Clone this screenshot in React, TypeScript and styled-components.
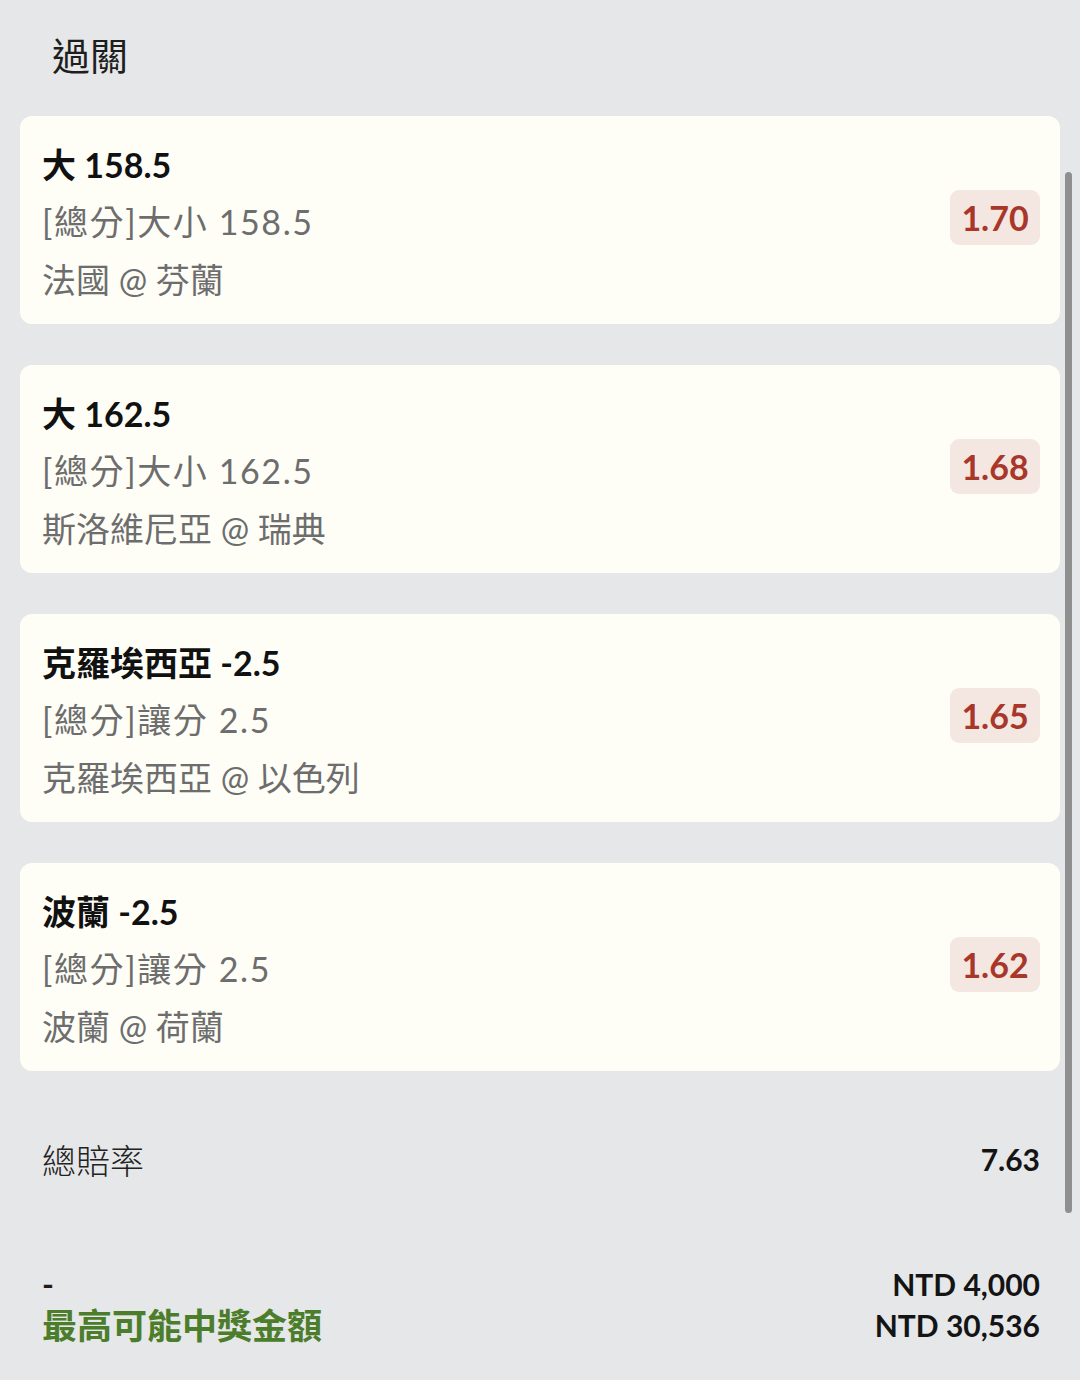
import styled, { createGlobalStyle } from 'styled-components';

const GlobalStyle = createGlobalStyle`
  html, body {
    margin: 0;
    padding: 0;
    background: #e6e7e9;
  }
  body {
    font-family: Lato, "Noto Sans CJK TC", sans-serif;
    color: #1c1c1c;
  }
`;

const Page = styled.div`
  position: relative;
  width: 1080px;
  height: 1380px;
  overflow: hidden;
  background: #e6e7e9;
  box-sizing: border-box;
  padding: 0 20px;
`;

const Header = styled.h1`
  margin: 0;
  height: 116px;
  display: flex;
  align-items: center;
  padding-left: 32px;
  padding-bottom: 10px;
  box-sizing: border-box;
  font-size: 38px;
  font-weight: 400;
  color: #1e1e1e;
`;

const CardList = styled.div`
  display: flex;
  flex-direction: column;
  gap: 41px;
`;

const Card = styled.div`
  height: 208px;
  box-sizing: border-box;
  background: #fefef7;
  border-radius: 12px;
  padding: 20px 20px 16px 22px;
  display: flex;
  align-items: center;
  justify-content: space-between;
`;

const Info = styled.div`
  display: flex;
  flex-direction: column;
`;

const Line = styled.div<{ $strong?: boolean; $spaced?: boolean }>`
  font-size: 34px;
  line-height: 57.5px;
  white-space: nowrap;
  letter-spacing: ${(p) => (p.$spaced ? '1.6px' : '0')};
  font-weight: ${(p) => (p.$strong ? 700 : 400)};
  color: ${(p) => (p.$strong ? '#111' : '#6d6d6d')};
`;

const Odds = styled.div`
  width: 90px;
  height: 55px;
  margin-bottom: 9px;
  border-radius: 9px;
  background: #f4e6e0;
  color: #a8372a;
  font-size: 34px;
  font-weight: 700;
  display: flex;
  align-items: center;
  justify-content: center;
`;

const Row = styled.div<{ $align?: string }>`
  display: flex;
  justify-content: space-between;
  align-items: ${(p) => p.$align || 'center'};
  padding: 0 20px 0 22px;
`;

const TotalRow = styled(Row)`
  margin-top: 66px;
  height: 44px;
`;

const Label = styled.div`
  font-size: 34px;
  font-weight: 300;
  color: #222;
`;

const Value = styled.div`
  font-size: 30px;
  font-weight: 700;
  color: #141414;
`;

const PayoutRow = styled(Row)`
  margin-top: 83px;
`;

const Stack = styled.div<{ $right?: boolean }>`
  display: flex;
  flex-direction: column;
  align-items: ${(p) => (p.$right ? 'flex-end' : 'flex-start')};
`;

const Dash = styled.div`
  font-size: 32px;
  font-weight: 700;
  line-height: 40px;
  height: 40px;
`;

const WinLabel = styled.div`
  font-size: 35px;
  font-weight: 700;
  line-height: 42px;
  color: #4b7d2b;
`;

const Amount = styled.div`
  font-size: 30px;
  font-weight: 700;
  line-height: 41px;
  color: #141414;
`;

const Scrollbar = styled.div`
  position: absolute;
  right: 8px;
  top: 172px;
  width: 7px;
  height: 1041px;
  border-radius: 4px;
  background: #8f8f90;
`;

const bets = [
  { title: '大 158.5', market: '[總分]大小 158.5', match: '法國 @ 芬蘭', odds: '1.70' },
  { title: '大 162.5', market: '[總分]大小 162.5', match: '斯洛維尼亞 @ 瑞典', odds: '1.68' },
  { title: '克羅埃西亞 -2.5', market: '[總分]讓分 2.5', match: '克羅埃西亞 @ 以色列', odds: '1.65' },
  { title: '波蘭 -2.5', market: '[總分]讓分 2.5', match: '波蘭 @ 荷蘭', odds: '1.62' },
];

export default function App() {
  return (
    <>
      <GlobalStyle />
      <Page>
        <Header>過關</Header>
        <CardList>
          {bets.map((b) => (
            <Card key={b.match}>
              <Info>
                <Line $strong>{b.title}</Line>
                <Line $spaced>{b.market}</Line>
                <Line>{b.match}</Line>
              </Info>
              <Odds>{b.odds}</Odds>
            </Card>
          ))}
        </CardList>
        <TotalRow>
          <Label>總賠率</Label>
          <Value>7.63</Value>
        </TotalRow>
        <PayoutRow $align="flex-end">
          <Stack>
            <Dash>-</Dash>
            <WinLabel>最高可能中獎金額</WinLabel>
          </Stack>
          <Stack $right>
            <Amount>NTD 4,000</Amount>
            <Amount>NTD 30,536</Amount>
          </Stack>
        </PayoutRow>
        <Scrollbar />
      </Page>
    </>
  );
}
